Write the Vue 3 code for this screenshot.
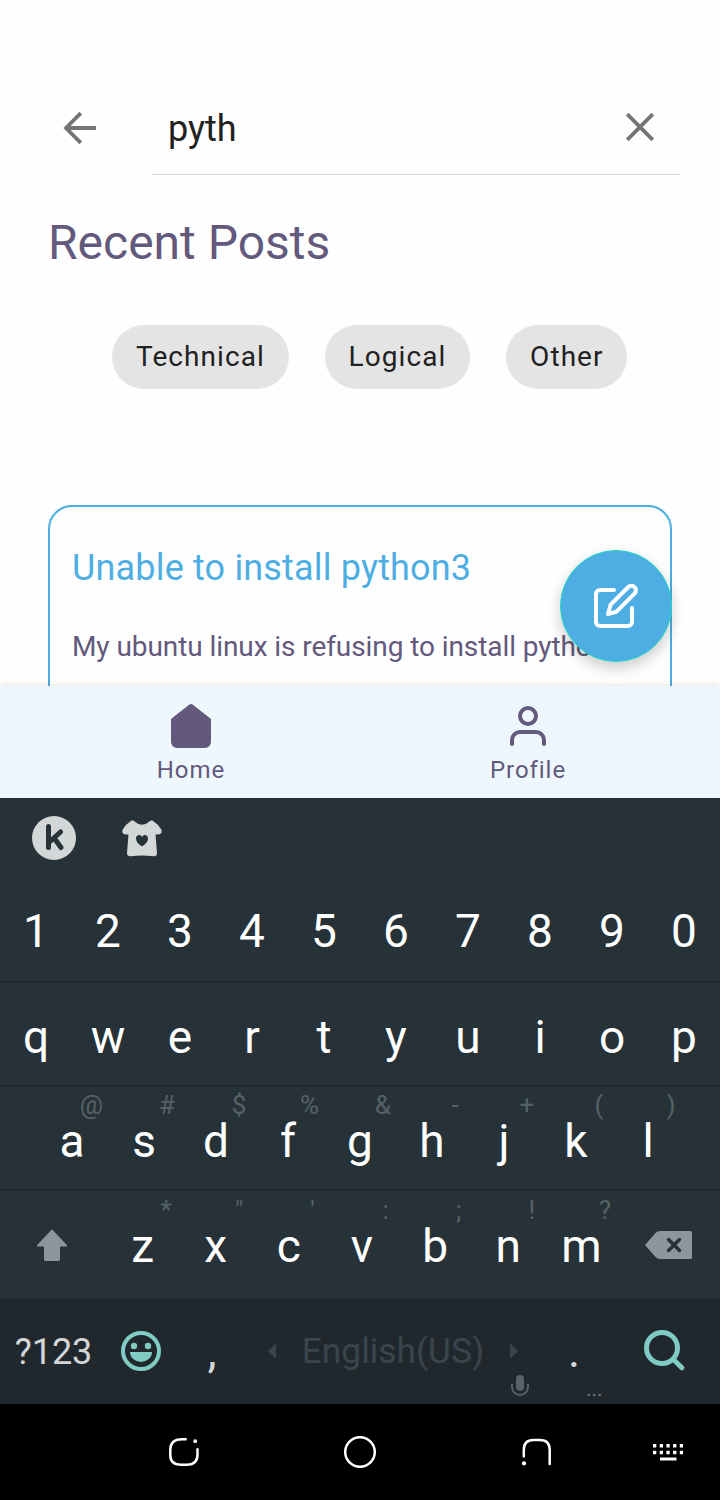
<script setup>
const digits = [...'1234567890']
const topRow = [...'qwertyuiop']
const homeRow = [
  ['a', '@'], ['s', '#'], ['d', '$'], ['f', '%'], ['g', '&'],
  ['h', '-'], ['j', '+'], ['k', '('], ['l', ')'],
]
const lowerRow = [
  ['z', '*'], ['x', '"'], ['c', "'"], ['v', ':'], ['b', ';'], ['n', '!'], ['m', '?'],
]
const chips = ['Technical', 'Logical', 'Other']
</script>

<template>
  <div class="screen">
    <main class="content">
      <header class="search">
        <svg class="back" width="36" height="36" viewBox="0 0 36 36" fill="none" stroke="#757575" stroke-width="3.8">
          <path d="M34 18H5M18.8 3.200L4 18L18.800 32.800" />
        </svg>
        <div class="field">
          <span class="query">pyth</span>
          <svg width="32" height="32" viewBox="0 0 32 32" fill="none" stroke="#757575" stroke-width="3.8">
            <path d="M3.200 3.200L28.800 28.800M28.800 3.200L3.200 28.800" />
          </svg>
        </div>
      </header>
      <h1>Recent Posts</h1>
      <div class="chips">
        <span v-for="c in chips" :key="c" class="chip">{{ c }}</span>
      </div>
      <article class="card">
        <h2>Unable to install python3</h2>
        <p>My ubuntu linux is refusing to install python</p>
      </article>
      <button class="fab">
        <svg width="48" height="48" viewBox="0 0 48 48" fill="none" stroke="#fff" stroke-width="4" stroke-linecap="round" stroke-linejoin="round">
          <path d="M22 8H8a4 4 0 0 0-4 4V40a4 4 0 0 0 4 4H36a4 4 0 0 0 4-4V26" />
          <path d="M36.300 5a4.530 4.530 0 0 1 6.400 6.400L24.500 29.700L16 32L18.600 22.700Z" />
        </svg>
      </button>
    </main>

    <nav class="tabs">
      <div class="tab home">
        <svg width="48" height="48" viewBox="0 0 48 48" fill="#62597c">
          <path d="M22.400 2.600Q24 1.300 25.600 2.600L44 17V40a6 6 0 0 1-6 6H10a6 6 0 0 1-6-6V17Z" />
        </svg>
        <span>Home</span>
      </div>
      <div class="tab profile">
        <svg width="48" height="48" viewBox="0 0 48 48" fill="none" stroke="#62597c" stroke-width="4" stroke-linecap="round">
          <circle cx="24" cy="14" r="8" />
          <path d="M8 42V38a8 8 0 0 1 8-8H32a8 8 0 0 1 8 8V42" />
        </svg>
        <span>Profile</span>
      </div>
    </nav>

    <section class="keyboard">
      <div class="tools">
        <svg width="44" height="44" viewBox="0 0 44 44">
          <circle cx="22" cy="22" r="22" fill="#d4d7d8" />
          <path d="M16.500 10.500V31.500M28.500 16L18 25.500M22.500 22.500L29 31.500" fill="none" stroke="#263238" stroke-width="5" stroke-linecap="round" />
        </svg>
        <svg width="40" height="37" viewBox="0 0 40 37">
          <path d="M9.500 .5Q11.500 0 13 1.700Q20 8 27 1.700Q28.500 0 30.500 .5Q36 4 39.300 9.500Q41 15 34.500 14.500H33.500L35 33Q35 36.500 31.500 36.300Q20 34.700 8.500 36.300Q5 36.500 5 33L6.500 14.500H5.500Q-1 15 .7 9.500Q4 4 9.500 .5Z" fill="#d4d7d8" />
          <path d="M20 26.500C16 24 13.700 21 14 18C14.400 14.700 18.400 14 20 17C21.600 14 25.600 14.700 26 18C26.300 21 24 24 20 26.500Z" fill="#263238" />
        </svg>
      </div>

      <div class="row digits">
        <span v-for="k in digits" :key="k" class="key">{{ k }}</span>
      </div>
      <div class="row letters">
        <span v-for="k in topRow" :key="k" class="key">{{ k }}</span>
      </div>
      <div class="row middle">
        <span v-for="[k, h] in homeRow" :key="k" class="key">{{ k }}<small>{{ h }}</small></span>
      </div>
      <div class="row lower">
        <span class="shift">
          <svg width="30" height="32" viewBox="0 0 30 32" fill="#8b979c">
            <path d="M15 .3L30 16.300V17.500H23V30.500Q23 32 21.500 32H8.500Q7 32 7 30.500V17.500H0V16.300Z" />
          </svg>
        </span>
        <span v-for="[k, h] in lowerRow" :key="k" class="key">{{ k }}<small>{{ h }}</small></span>
        <span class="erase">
          <svg width="47" height="28" viewBox="0 0 47 28">
            <path d="M0 14L10.500 2Q12.500 0 15 0H45.500Q47 0 47 1.500V26.500Q47 28 45.500 28H15Q12.500 28 10.500 26Z" fill="#8b979c" />
            <path d="M23.500 8.500L34.500 19.500M34.500 8.500L23.500 19.500" stroke="#263238" stroke-width="3.400" stroke-linecap="round" />
          </svg>
        </span>
      </div>

      <div class="bottom">
        <span class="symbols">?123</span>
        <span class="emoji">
          <svg width="40" height="40" viewBox="0 0 40 40" fill="#80cbc4">
            <circle cx="20" cy="20" r="18" fill="none" stroke="#80cbc4" stroke-width="4" />
            <circle cx="13" cy="15" r="3.200" />
            <circle cx="27" cy="15" r="3.200" />
            <path d="M9 21H31A11 10 0 0 1 9 21Z" />
          </svg>
        </span>
        <span class="comma">,</span>
        <span class="space">
          <svg width="8" height="16" viewBox="0 0 8 16" fill="#39454b"><path d="M8 0V16L0 8Z" /></svg>
          <span class="language">English(US)</span>
          <svg width="8" height="16" viewBox="0 0 8 16" fill="#39454b"><path d="M0 0V16L8 8Z" /></svg>
          <svg class="mic" width="18" height="21" viewBox="0 0 18 21">
            <rect x="5" y="0" width="8" height="16" rx="4" fill="#566268" />
            <path d="M1 9V12A8 8 0 0 0 17 12V9" fill="none" stroke="#566268" stroke-width="2" />
          </svg>
        </span>
        <span class="period">.<small>...</small></span>
        <span class="find">
          <svg width="41" height="41" viewBox="0 0 41 41" fill="none" stroke="#80cbc4" stroke-width="5">
            <circle cx="18" cy="18" r="15.500" />
            <path d="M29 29L37.800 37.800" stroke-linecap="round" />
          </svg>
        </span>
      </div>
    </section>

    <footer class="system">
      <svg width="32" height="32" viewBox="0 0 32 32" fill="none" stroke="#fff" stroke-width="2.500" stroke-linecap="round">
        <path d="M17.700 3.300H14Q2.300 3.300 2.300 14V19Q2.300 28.700 13 28.700H19Q29.500 28.700 29.500 18.500V13.300" />
        <circle cx="27.200" cy="5.200" r="1.900" fill="#fff" stroke="none" />
      </svg>
      <svg width="32" height="32" viewBox="0 0 32 32" fill="none" stroke="#fff" stroke-width="2.500">
        <circle cx="16" cy="16" r="14.800" />
      </svg>
      <svg width="32" height="32" viewBox="0 0 32 32" fill="none" stroke="#fff" stroke-width="2.500" stroke-linecap="round">
        <path d="M3.800 20.500V14Q3.800 4 13.500 4H20Q29.700 4 29.700 14V28" />
        <circle cx="4" cy="27.400" r="2.100" fill="#fff" stroke="none" />
      </svg>
      <svg class="ime" width="30" height="17" viewBox="0 0 30 17" fill="none" stroke="#fff" stroke-width="3">
        <path d="M0 1.750H31M0 8.400H31" stroke-width="3.500" stroke-dasharray="3.300 3.400" />
        <path d="M7 15H23.500" />
      </svg>
    </footer>
  </div>
</template>

<style>
body {
  margin: 0;
}
</style>

<style scoped>
.screen {
  width: 720px;
  height: 1500px;
  display: flex;
  flex-direction: column;
  font-family: Roboto, "Liberation Sans", sans-serif;
  background: #fefefe;
  overflow: hidden;
}
svg {
  display: block;
  flex: none;
}
.content {
  position: relative;
  height: 686px;
  box-sizing: border-box;
  padding: 80px 48px 0;
  overflow: hidden;
}
.search {
  display: flex;
  height: 94px;
  margin-right: -8px;
}
.back {
  margin: 30px 54px 0 14px;
}
.field {
  flex: 1;
  display: flex;
  justify-content: space-between;
  box-sizing: border-box;
  height: 95px;
  padding: 0 24px 0 16px;
  border-bottom: 1px solid #d8d8d8;
}
.field svg {
  margin-top: 31px;
}
.query {
  font-size: 36px;
  line-height: 99px;
  color: #212121;
}
h1 {
  margin: 39px 0 0;
  font-size: 48px;
  line-height: 60px;
  font-weight: 400;
  color: #62597c;
}
.chips {
  display: flex;
  gap: 36px;
  margin: 52px 0 0 64px;
}
.chip {
  height: 64px;
  box-sizing: border-box;
  padding: 0 23.800px 0 24px;
  border-radius: 32px;
  background: #e4e4e4;
  color: #212121;
  font-size: 28px;
  line-height: 63px;
  letter-spacing: 1.060px;
}
.card {
  height: 300px;
  box-sizing: border-box;
  margin-top: 116px;
  padding: 39px 22px 0;
  border: 2px solid #4eaee3;
  border-radius: 24px;
  white-space: nowrap;
}
h2 {
  margin: 0;
  font-size: 36px;
  line-height: 44px;
  font-weight: 400;
  letter-spacing: .17px;
  color: #4eaee3;
}
p {
  margin: 39px 0 0;
  font-size: 28px;
  line-height: 36px;
  letter-spacing: -.08px;
  color: #62597c;
}
.fab {
  position: absolute;
  right: 48px;
  bottom: 24px;
  width: 112px;
  height: 112px;
  padding: 0;
  display: grid;
  place-items: center;
  border: 1px solid #20dac5;
  border-radius: 50%;
  background: #4eaee3;
  box-shadow: 0 6px 14px rgba(0, 0, 0, .2);
}
.tabs {
  position: relative;
  display: flex;
  height: 112px;
  background: #eff7fe;
  box-shadow: 0 0 7px rgba(0, 0, 0, .13);
}
.tab {
  display: flex;
  flex-direction: column;
  align-items: center;
  box-sizing: border-box;
  padding-top: 16px;
  color: #62597c;
  font-size: 24px;
  line-height: 28px;
  letter-spacing: .95px;
}
.home {
  width: 382px;
}
.profile {
  width: 292px;
}
.tab span {
  margin-top: 6px;
}
.keyboard {
  position: relative;
  height: 606px;
  background: #273238;
  color: #fff;
}
.tools {
  display: flex;
  gap: 46px;
  height: 84px;
  box-sizing: border-box;
  padding: 18px 0 0 32px;
}
.tools svg:last-child {
  margin-top: 4px;
}
.row {
  display: flex;
  height: 104px;
  box-sizing: border-box;
  border-bottom: 2px solid #1f282e;
  font-size: 46px;
}
.row.digits {
  height: 101px;
}
.key {
  position: relative;
  flex: 1;
  text-align: center;
  line-height: 109px;
}
.digits .key {
  line-height: 99px;
}
.middle {
  padding: 0 36px;
}
.key small {
  position: absolute;
  top: 3px;
  right: 5px;
  min-width: 16px;
  font-size: 26px;
  line-height: 30px;
  color: #566166;
}
.row.lower {
  height: 107px;
  border-bottom: 0;
}
.lower .key {
  line-height: 111px;
}
.lower .key small {
  top: 4px;
  line-height: 30px;
}
.shift {
  width: 70px;
  padding: 38px 0 0 37px;
  box-sizing: border-box;
  margin-right: 36px;
}
.erase {
  width: 102px;
  box-sizing: border-box;
  padding: 40px 0 0 27px;
}
.bottom {
  display: flex;
  align-items: center;
  height: 106px;
  background: #20282e;
  font-size: 36px;
  color: #d4d5d6;
}
.symbols {
  width: 107px;
  margin-right: -1px;
  padding-top: 2px;
  box-sizing: border-box;
  text-align: center;
  letter-spacing: -.1px;
}
.emoji {
  width: 70px;
  padding-left: 15px;
  box-sizing: border-box;
}
.comma {
  width: 72px;
  text-align: center;
  font-size: 46px;
}
.space {
  position: relative;
  width: 290px;
  height: 100%;
  display: flex;
  align-items: center;
  justify-content: space-between;
  box-sizing: border-box;
  padding: 0 20px;
  color: #39454b;
}
.language {
  font-size: 35.3px;
}
.mic {
  position: absolute;
  left: 263px;
  top: 77px;
}
.period {
  position: relative;
  width: 72px;
  text-align: center;
  font-size: 46px;
}
.period small {
  position: absolute;
  left: 48px;
  top: 50px;
  font-size: 21px;
  line-height: 30px;
  color: #6b7479;
}
.find {
  padding: 0 0 1px 34px;
}
.system {
  display: flex;
  align-items: center;
  height: 96px;
  gap: 144px;
  padding-left: 168px;
  background: #000;
}
.ime {
  margin-left: -43px;
}
</style>
